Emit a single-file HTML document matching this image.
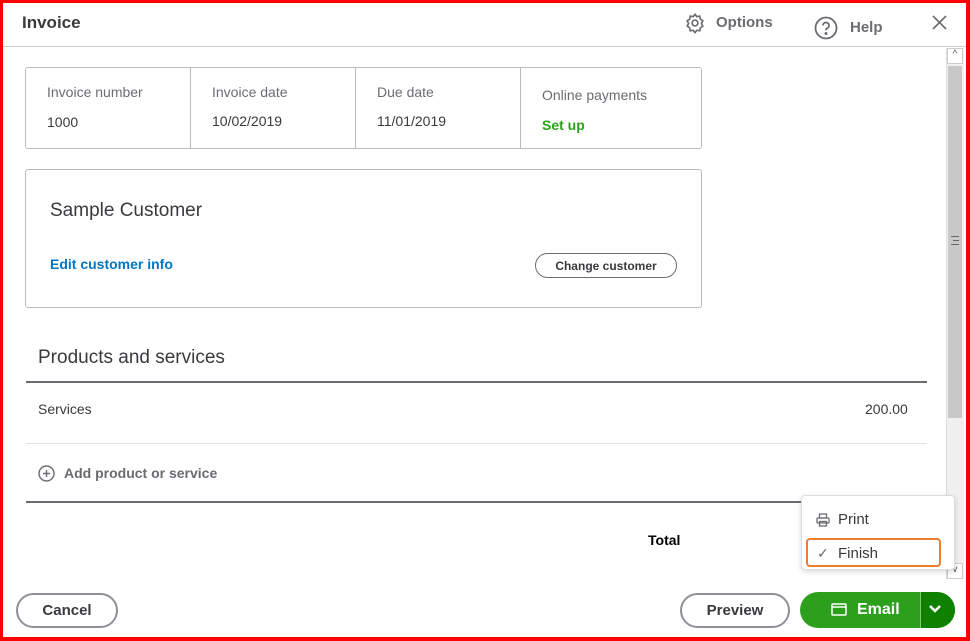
<!DOCTYPE html>
<html><head><meta charset="utf-8"><style>
*{box-sizing:border-box;margin:0;padding:0}
body{width:970px;height:641px;overflow:hidden;background:#fff;font-family:"Liberation Sans",sans-serif;color:#393a3d;position:relative}
.frame{position:absolute;left:0;top:0;width:970px;height:641px;border:3px solid #f00;border-right-width:4px;border-bottom-width:4px;z-index:50;pointer-events:none}
.abs{position:absolute}
.hdr{left:0;top:0;width:970px;height:47px;border-bottom:1px solid #ccc}
.box{border:1px solid #bbb;border-radius:3px}
.lbl{font-size:14px;color:#6b6c72}
.val{font-size:14px;color:#393a3d}
.btn{border:2px solid #8d9096;border-radius:18px;font-weight:bold;font-size:15px;color:#393a3d;display:flex;align-items:center;justify-content:center}
</style></head><body>
<div class="frame"></div>
<div class="abs hdr"></div>
<div class="abs" style="left:22px;top:13px;font-size:17px;font-weight:bold;color:#393a3d">Invoice</div>
<svg class="abs" style="left:684px;top:12px" width="22" height="22" viewBox="0 0 24 24" fill="none" stroke="#6b6c72" stroke-width="1.8"><circle cx="12" cy="12" r="3.2"/><path d="M12 2.5l2 2.6 3.2-.6.6 3.2 2.7 1.9-1.5 2.9 1.5 2.9-2.7 1.9-.6 3.2-3.2-.6-2 2.6-2-2.6-3.2.6-.6-3.2-2.7-1.9 1.5-2.9-1.5-2.9 2.7-1.9.6-3.2 3.2.6z"/></svg>
<div class="abs" style="left:716px;top:14px;font-size:15px;font-weight:bold;color:#6b6c72">Options</div>
<svg class="abs" style="left:814px;top:16px" width="24" height="24" viewBox="0 0 24 24" fill="none" stroke="#6b6c72" stroke-width="1.8"><circle cx="12" cy="12" r="10.5"/><path d="M9 9.5a3 3 0 1 1 4 2.8c-.8.4-1 1-1 1.9"/><circle cx="12" cy="17.5" r=".6" fill="#6b6c72"/></svg>
<div class="abs" style="left:850px;top:19px;font-size:15px;font-weight:bold;color:#6b6c72">Help</div>
<svg class="abs" style="left:932px;top:15px" width="15" height="15" viewBox="0 0 15 15" stroke="#6b6c72" stroke-width="1.6"><path d="M1 1l13 13M14 1L1 14"/></svg>

<!-- scrollbar -->
<div class="abs" style="left:946px;top:48px;width:18px;height:531px;background:#f0f0f0;border-left:1px solid #ddd"></div>
<div class="abs" style="left:947px;top:48px;width:16px;height:16px;font-size:10px;text-align:center;color:#555;border:1px solid #ccc;background:#fff">^</div>
<div class="abs" style="left:948px;top:66px;width:14px;height:352px;background:#c8c8c8"></div>
<div class="abs" style="left:951px;top:236px;width:8px;height:9px;border-top:1px solid #666;border-bottom:1px solid #666"></div>
<div class="abs" style="left:953px;top:240px;width:6px;height:1px;background:#666"></div>
<div class="abs" style="left:947px;top:563px;width:16px;height:16px;font-size:10px;text-align:center;color:#555;border:1px solid #ccc;background:#fff">v</div>

<div class="abs box" style="left:25px;top:67px;width:677px;height:82px"></div>
<div class="abs" style="left:190px;top:68px;width:1px;height:80px;background:#bbb"></div>
<div class="abs" style="left:355px;top:68px;width:1px;height:80px;background:#bbb"></div>
<div class="abs" style="left:520px;top:68px;width:1px;height:80px;background:#bbb"></div>
<div class="abs lbl" style="left:47px;top:84px">Invoice number</div>
<div class="abs val" style="left:47px;top:114px">1000</div>
<div class="abs lbl" style="left:212px;top:84px">Invoice date</div>
<div class="abs val" style="left:212px;top:113px">10/02/2019</div>
<div class="abs lbl" style="left:377px;top:84px">Due date</div>
<div class="abs val" style="left:377px;top:113px">11/01/2019</div>
<div class="abs lbl" style="left:542px;top:87px">Online payments</div>
<div class="abs" style="left:542px;top:117px;font-size:14px;font-weight:bold;color:#2ca01c">Set up</div>

<div class="abs box" style="left:25px;top:169px;width:677px;height:139px"></div>
<div class="abs" style="left:50px;top:200px;font-size:19px;color:#393a3d">Sample Customer</div>
<div class="abs" style="left:50px;top:256px;font-size:14px;font-weight:bold;color:#0077c5">Edit customer info</div>
<div class="abs btn" style="left:535px;top:253px;width:142px;height:25px;font-size:12px;border-width:1.5px;border-color:#6b6c72">Change customer</div>

<div class="abs" style="left:38px;top:347px;font-size:19px;color:#393a3d">Products and services</div>
<div class="abs" style="left:26px;top:381px;width:901px;height:2px;background:#6b6c72"></div>
<div class="abs val" style="left:38px;top:401px">Services</div>
<div class="abs val" style="left:865px;top:401px">200.00</div>
<div class="abs" style="left:26px;top:443px;width:901px;height:1px;background:#e4e4e4"></div>
<svg class="abs" style="left:38px;top:465px" width="17" height="17" viewBox="0 0 17 17" fill="none" stroke="#6b6c72" stroke-width="1.4"><circle cx="8.5" cy="8.5" r="7.5"/><path d="M8.5 5v7M5 8.5h7"/></svg>
<div class="abs" style="left:64px;top:465px;font-size:14px;font-weight:bold;color:#6b6c72">Add product or service</div>
<div class="abs" style="left:26px;top:501px;width:901px;height:2px;background:#6b6c72"></div>
<div class="abs" style="left:648px;top:532px;font-size:14px;font-weight:bold;color:#000">Total</div>

<!-- dropdown -->
<div class="abs" style="left:801px;top:495px;width:154px;height:75px;background:#fff;border:1px solid #ddd;border-radius:4px;box-shadow:0 2px 6px rgba(0,0,0,.15)"></div>
<svg class="abs" style="left:816px;top:513px" width="14" height="14" viewBox="0 0 14 14" fill="none" stroke="#6b6c72" stroke-width="1.3"><rect x="3.5" y="1" width="7" height="4"/><rect x="1" y="5" width="12" height="5" rx="1"/><rect x="3.5" y="8.5" width="7" height="4.5"/></svg>
<div class="abs" style="left:838px;top:511px;font-size:15px;color:#393a3d">Print</div>
<div class="abs" style="left:806px;top:538px;width:135px;height:29px;border:2px solid #ec7d31;border-radius:4px"></div>
<div class="abs" style="left:817px;top:545px;font-size:14px;color:#6b6c72">✓</div>
<div class="abs" style="left:838px;top:545px;font-size:15px;color:#393a3d">Finish</div>

<!-- footer -->
<div class="abs btn" style="left:16px;top:593px;width:102px;height:35px">Cancel</div>
<div class="abs btn" style="left:680px;top:593px;width:110px;height:35px">Preview</div>
<div class="abs" style="left:800px;top:592px;width:155px;height:36px;border-radius:18px;background:#2ca01c;overflow:hidden">
<div class="abs" style="left:120px;top:0;width:35px;height:36px;background:#108000;border-left:1px solid #7fc77a"></div>
</div>
<svg class="abs" style="left:831px;top:603px" width="16" height="13" viewBox="0 0 16 13" fill="none" stroke="#fff" stroke-width="1.5"><rect x="1" y="1" width="14" height="11" rx="1"/><path d="M1 4h14"/></svg>
<div class="abs" style="left:857px;top:601px;font-size:16px;font-weight:bold;color:#fff">Email</div>
<svg class="abs" style="left:928px;top:604px" width="14" height="10" viewBox="0 0 14 10" fill="none" stroke="#fff" stroke-width="2.5"><path d="M2 2l5 5 5-5"/></svg>
</body></html>
